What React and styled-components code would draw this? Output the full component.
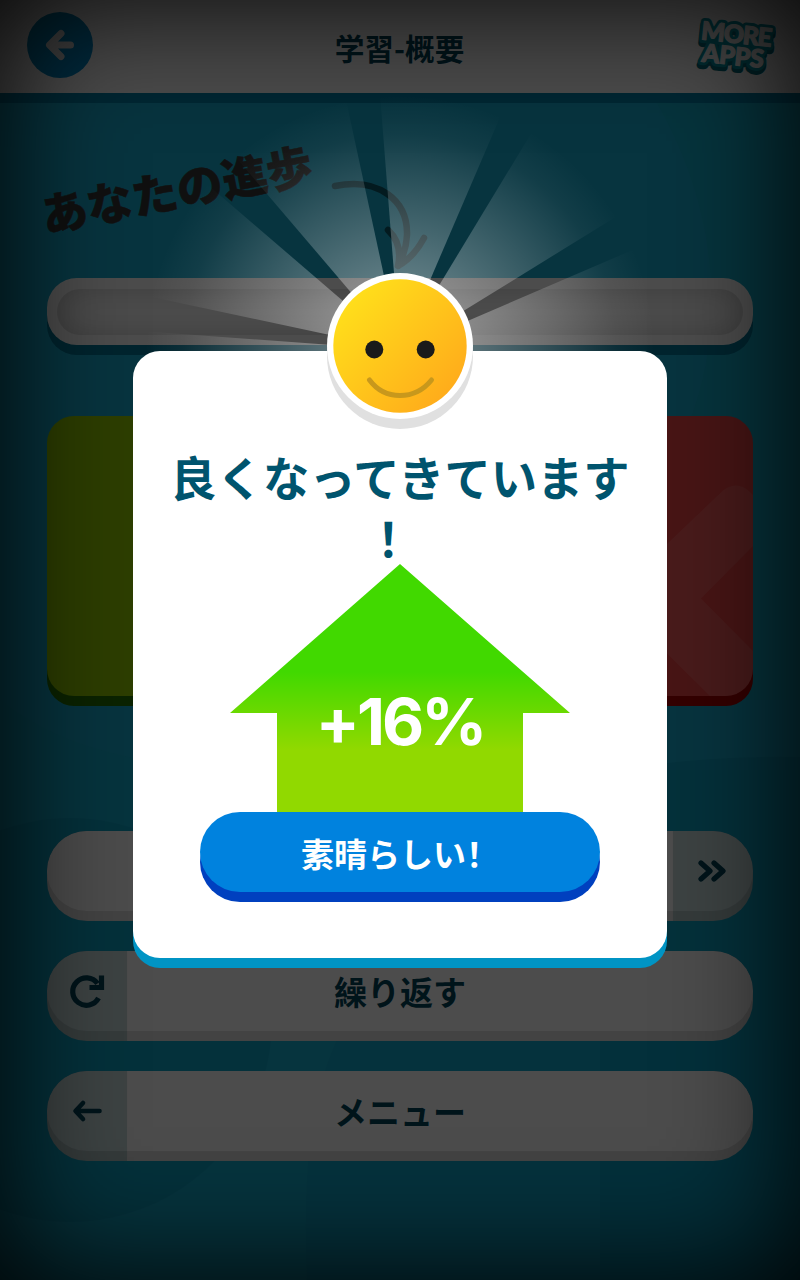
import React from 'react';
import styled, { createGlobalStyle } from 'styled-components';

const GlobalStyle = createGlobalStyle`
  * {
    box-sizing: border-box;
  }

  body {
    margin: 0;
    overflow: hidden;
    background: #073441;
    font-family: "Noto Sans CJK SC", "Noto Sans CJK JP", sans-serif;
    font-weight: 700;
  }
`;

const Screen = styled.div`
  position: relative;
  width: 800px;
  height: 1280px;
  overflow: hidden;
  background: #1aafd2;
`;

const Blobs = styled.svg`
  position: absolute;
  inset: 0;
`;

const Page = styled.div`
  position: relative;
  display: flex;
  flex-direction: column;
`;

const TopBar = styled.header`
  display: flex;
  align-items: center;
  justify-content: space-between;
  height: 93px;
  padding: 0 24px 4px 27px;
  background: #fff;
  box-shadow: 0 10px 0 #0083ab;
`;

const BackButton = styled.div`
  width: 66px;
  height: 66px;
  border-radius: 50%;
  background: linear-gradient(135deg, #0087b5, #0091d9);
`;

const Title = styled.h1`
  margin: 6px 0 0 16px;
  font-size: 29.7px;
  line-height: 40px;
  color: #004459;
`;

const ProgressArea = styled.section`
  height: 185px;
  padding: 61px 0 0 39px;
  display: flex;
`;

const ProgressLabel = styled.div`
  width: 277px;
  height: 67px;
  font-size: 45.8px;
  line-height: 66px;
  font-weight: 900;
  color: #383838;
  -webkit-text-stroke: 0.5px #383838;
  white-space: nowrap;
  transform: rotate(-11deg);
`;

const CurvedArrow = styled.svg`
  margin: 19px 0 0 10px;
`;

const Track = styled.div`
  height: 67px;
  margin: 0 47px;
  padding: 11px 10px 10px;
  border-radius: 30px;
  background: #fff;
  box-shadow: 0 10px 0 #007899;
`;

const TrackInner = styled.div`
  height: 46px;
  border-radius: 23px;
  background: #fff;
  box-shadow: inset 0 0 30px rgba(0, 0, 0, 0.2);
`;

const Cards = styled.div`
  display: grid;
  grid-template-columns: 1fr 1fr;
  gap: 26px;
  margin: 71px 47px 0;
`;

const ScoreCard = styled.div`
  height: 280px;
  border-radius: 27px;
  overflow: hidden;
  background: ${(p) => p.$color};
  box-shadow: 0 10px 0 ${(p) => p.$edge};
`;

const Actions = styled.nav`
  display: flex;
  flex-direction: column;
  gap: 30px;
  margin: 135px 47px 0;
`;

const ActionShell = styled.div`
  height: 90px;
  border-radius: 40px;
  overflow: hidden;
  background: linear-gradient(${(p) => (p.$iconRight ? 'to left' : 'to right')}, #b3c5c7 80px, #dfdfdf 80px);
`;

const ActionFace = styled.div`
  display: flex;
  flex-direction: ${(p) => (p.$iconRight ? 'row-reverse' : 'row')};
  height: 80px;
  border-radius: 40px;
  background: linear-gradient(${(p) => (p.$iconRight ? 'to left' : 'to right')}, #cbdfe1 80px, #fff 80px);
`;

const ActionIcon = styled.div`
  width: 80px;
  height: 80px;
`;

const ActionLabel = styled.div`
  flex: 1;
  padding-right: 80px;
  text-align: center;
  font-size: 33px;
  line-height: 80px;
  color: #004459;
`;

const Overlay = styled.div`
  position: absolute;
  inset: 0;
  display: flex;
  flex-direction: column;
  align-items: center;
  padding-top: 351px;
  background: rgba(0, 0, 0, 0.7);
  box-shadow: inset 0 0 128px #000;
`;

const Rays = styled.svg`
  position: absolute;
  left: 0;
  top: 0;
`;

const Modal = styled.div`
  position: relative;
  display: flex;
  flex-direction: column;
  align-items: center;
  width: 534px;
  height: 607px;
  padding-top: 94px;
  border-radius: 27px;
  background: #fff;
  box-shadow: 0 10px 0 #0094c4;
`;

const Face = styled.svg`
  position: absolute;
  left: 193px;
  top: -79px;
`;

const Message = styled.div`
  width: 480px;
  height: 119px;
  text-align: center;
  font-size: 46.3px;
  line-height: 61px;
  color: #00546e;
  word-break: break-all;
  line-break: anywhere;
`;

const Growth = styled.div`
  display: flex;
  justify-content: center;
  width: 340px;
  height: 248px;
  padding-top: 118px;
  background: linear-gradient(#41d900 108px, #91d900 186px);
  clip-path: polygon(50% 0, 100% 149px, 293px 149px, 293px 100%, 47px 100%, 47px 149px, 0 149px);
`;

const Percent = styled.span`
  font-family: Inter, sans-serif;
  font-size: 65px;
  line-height: 80px;
  letter-spacing: -3px;
  color: #fff;
`;

const Confirm = styled.div`
  width: 400px;
  height: 80px;
  border-radius: 40px;
  text-align: center;
  font-size: 33px;
  line-height: 82px;
  color: #fff;
  background: #0082de;
  box-shadow: 0 10px 0 #0040bf;
`;

const BackIcon = () => (
  <svg width="66" height="66" viewBox="0 0 66 66" fill="none" stroke="#e8e8e8" strokeWidth="7" strokeLinecap="round" strokeLinejoin="round">
    <path d="M34 21.5 22.5 33 34 44.5M24 33H43.5" />
  </svg>
);

const MoreApps = () => (
  <svg width="86" height="66" viewBox="690 12 86 66">
    <g
      transform="rotate(6 735 46)"
      fontFamily="Lato, sans-serif"
      fontWeight="900"
      fontSize="25"
      strokeLinejoin="round"
    >
      <g fill="#007080" stroke="#007080" strokeWidth="8" transform="translate(0 3.5)">
        <text x="700" y="43" textLength="71">MORE</text>
        <text x="703" y="65" textLength="62">APPS</text>
      </g>
      <g fill="#009aac" stroke="#009aac" strokeWidth="7">
        <text x="700" y="43" textLength="71">MORE</text>
        <text x="703" y="65" textLength="62">APPS</text>
      </g>
      <g fill="#fff" stroke="#fff" strokeWidth="1.2">
        <text x="700" y="43" textLength="71">MORE</text>
        <text x="703" y="65" textLength="62">APPS</text>
      </g>
    </g>
  </svg>
);

const icons = {
  next: <path d="M28 32 37 40 28 48M41 32 50 40 41 48" />,
  repeat: <path d="M51.5 47A13.7 13.7 0 1 1 50.5 32.5M54.5 24.5V36.5H42.5" strokeLinecap="butt" strokeLinejoin="miter" />,
  menu: <path d="M36 32 28.5 40 36 48M29.5 40H52.5" strokeWidth="4.6" />,
};

const actions = [
  { icon: 'next', iconRight: true },
  { icon: 'repeat', label: '繰り返す' },
  { icon: 'menu', label: 'メニュー' },
];

const App = () => {
  return (
    <Screen>
      <GlobalStyle />
      <Blobs width="800" height="1280">
        <path d="M0 700C60 745 110 755 200 770H800V1280H0Z" fill="#0fa9c9" opacity="0.25" />
        <path d="M655 100C720 210 725 330 690 420V700H800V100Z" fill="#0aa5b5" opacity="0.2" />
        <path d="M600 775Q680 755 800 757V1280H600Z" fill="#0090b5" opacity="0.3" />
        <circle cx="70" cy="1020" r="202" fill="#0090b5" opacity="0.3" />
        <path d="M337 1040C310 1100 303 1170 307 1280H800V1040Z" fill="#0098c0" opacity="0.25" />
      </Blobs>

      <Page>
        <TopBar>
          <BackButton>
            <BackIcon />
          </BackButton>
          <Title>学習-概要</Title>
          <MoreApps />
        </TopBar>

        <ProgressArea>
          <ProgressLabel>あなたの進歩</ProgressLabel>
          <CurvedArrow width="104" height="100" viewBox="326 173 104 100" fill="none" stroke="#000" strokeOpacity="0.5" strokeLinecap="round" strokeLinejoin="round">
            <path d="M335 186C378 177 408 200 407 235Q406 252 398 266Q414 257 424 238M398 266Q403 244 388 230" strokeWidth="6.5" />
          </CurvedArrow>
        </ProgressArea>

        <Track>
          <TrackInner />
        </Track>

        <Cards>
          <ScoreCard $color="#96d000" $edge="#257700" />
          <ScoreCard $color="#f24848" $edge="#b00000">
            <svg width="340" height="280" viewBox="413 416 340 280" fill="#fff" fillOpacity="0.11">
              <path d="M656.5 554 723 490.500Q737 480 750 492L766 508Q775 520 766 533L701 598.500 766 664Q775 677 766 691L750 707Q737 718 723 709L656.5 643 590 709 546 664 612 598.500 546 533 590 487.500Z" />
            </svg>
          </ScoreCard>
        </Cards>

        <Actions>
          {actions.map((a) => (
            <ActionShell key={a.icon} $iconRight={a.iconRight}>
              <ActionFace $iconRight={a.iconRight}>
                <ActionIcon>
                  <svg width="80" height="80" viewBox="0 0 80 80" fill="none" stroke="#004459" strokeWidth="5.2" strokeLinecap="round" strokeLinejoin="round">
                    {icons[a.icon]}
                  </svg>
                </ActionIcon>
                {a.label && <ActionLabel>{a.label}</ActionLabel>}
              </ActionFace>
            </ActionShell>
          ))}
        </Actions>
      </Page>

      <Overlay>
        <Rays width="800" height="600">
          <defs>
            <radialGradient id="glow" gradientUnits="userSpaceOnUse" cx="400" cy="350" r="255">
              <stop offset="0" stopColor="#fff" stopOpacity="0.5" />
              <stop offset="0.6" stopColor="#fff" stopOpacity="0.18" />
              <stop offset="0.85" stopColor="#fff" stopOpacity="0.045" />
              <stop offset="1" stopColor="#fff" stopOpacity="0" />
            </radialGradient>
          </defs>
          <g fill="url(#glow)">
            <path d="M400 352 100 352 100 328 400 350Z" />
            <path d="M400 350 100 286 100 92Z" />
            <path d="M400 350 187 100 346 100Z" />
            <path d="M400 350 380 94 510 94Z" />
            <path d="M400 350 555 94 700 94 700 165Z" />
            <path d="M400 350 700 221 700 352 400 352Z" />
          </g>
        </Rays>

        <Modal>
          <Face width="148" height="158" viewBox="0 0 148 158">
            <defs>
              <linearGradient id="skin" x1="0.1" y1="0.15" x2="0.85" y2="0.85">
                <stop offset="0" stopColor="#ffdf1b" />
                <stop offset="1" stopColor="#ffad1b" />
              </linearGradient>
            </defs>
            <circle cx="74" cy="84" r="73" fill="#e0e0e0" />
            <circle cx="74" cy="74" r="73" fill="#fff" />
            <circle cx="74" cy="74" r="66.7" fill="url(#skin)" />
            <circle cx="48.3" cy="77.5" r="9" fill="#1a1a1a" />
            <circle cx="99.7" cy="77.5" r="9" fill="#1a1a1a" />
            <path d="M43.5 108Q55 123.5 74 123.5T105.5 108" fill="none" stroke="#c8981c" strokeWidth="5" strokeLinecap="round" />
          </Face>
          <Message>良くなってきています！</Message>
          <Growth>
            <Percent>+16%</Percent>
          </Growth>
          <Confirm>素晴らしい！</Confirm>
        </Modal>
      </Overlay>
    </Screen>
  );
};

export default App;
